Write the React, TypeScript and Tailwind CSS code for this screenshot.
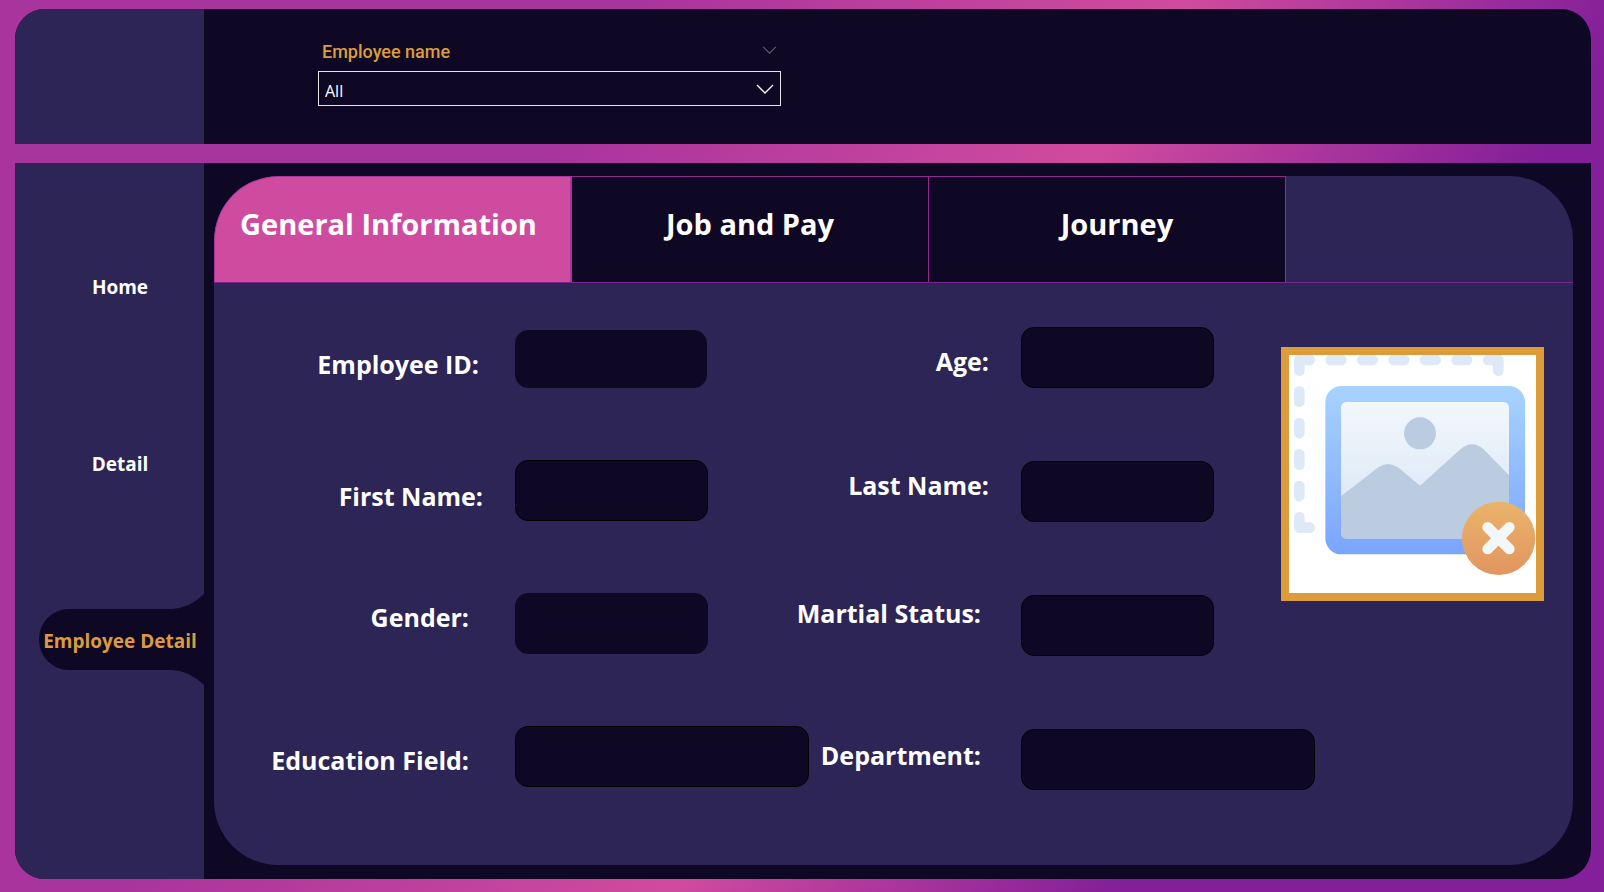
import React from "react";

type Field = {
  id: string;
  label: string;
  labelClass: string;
  inputClass: string;
};

const leftFields: Field[] = [
  { id: "employee-id", label: "Employee ID:", labelClass: "pt-4 pr-9", inputClass: "h-[58px] w-[192px] border-[#0f0825]" },
  { id: "first-name", label: "First Name:", labelClass: "pt-[18px] pr-8", inputClass: "h-[61px] w-[193px] border-black" },
  { id: "gender", label: "Gender:", labelClass: "pt-[6px] pr-[46px]", inputClass: "h-[61px] w-[193px] border-[#0f0825]" },
  { id: "education-field", label: "Education Field:", labelClass: "pt-4 pr-[46px]", inputClass: "h-[61px] w-[294px] border-black" },
];

const rightFields: Field[] = [
  { id: "age", label: "Age:", labelClass: "pt-4 pr-8", inputClass: "h-[61px] w-[193px] border-black" },
  { id: "last-name", label: "Last Name:", labelClass: "pt-[6px] pr-8", inputClass: "h-[61px] w-[193px] border-black" },
  { id: "marital-status", label: "Martial Status:", labelClass: "pr-10", inputClass: "h-[61px] w-[193px] border-black" },
  { id: "department", label: "Department:", labelClass: "pt-2 pr-10", inputClass: "h-[61px] w-[294px] border-black" },
];

function FieldRow({ field }: { field: Field }) {
  return (
    <div className="flex items-start">
      <label
        htmlFor={field.id}
        className={`flex-1 whitespace-nowrap text-right text-[25px] leading-9 font-bold ${field.labelClass}`}
      >
        {field.label}
      </label>
      <div className="flex w-[193px] shrink-0">
        <input
          id={field.id}
          type="text"
          readOnly
          className={`shrink-0 rounded-[13px] border bg-[#0f0825] px-4 text-xl text-white outline-none ${field.inputClass}`}
        />
      </div>
    </div>
  );
}

function Chevron({ className }: { className: string }) {
  return (
    <svg viewBox="0 0 18 10" fill="none" stroke="currentColor" className={className} aria-hidden="true">
      <path d="M1 1l8 8 8-8" strokeWidth="1.4" />
    </svg>
  );
}

function PhotoPlaceholder() {
  return (
    <svg viewBox="87 75 741 714" className="block w-full" role="img" aria-label="No photo">
      <defs>
        <linearGradient id="frame" x1="0" y1="0" x2="0" y2="1">
          <stop offset="0" stopColor="#a8d3ff" />
          <stop offset="1" stopColor="#7aa5ff" />
        </linearGradient>
        <linearGradient id="sky" x1="0" y1="0" x2="0" y2="1">
          <stop offset="0" stopColor="#f2f7fc" />
          <stop offset="1" stopColor="#d6e4f5" />
        </linearGradient>
        <linearGradient id="badge" x1="0" y1="0" x2="0" y2="1">
          <stop offset="0" stopColor="#e9b46a" />
          <stop offset="1" stopColor="#e29560" />
        </linearGradient>
        <clipPath id="scene">
          <rect x="243" y="216" width="504" height="410" rx="16" />
        </clipPath>
      </defs>
      <g fill="none" stroke="#dde9f7" strokeWidth="32" strokeLinecap="round" strokeLinejoin="round">
        <path d="M118 122V90h31M212 90h32M307 90h31M401 90h32M495 90h32M590 90h31M684 90h31v32" />
        <path d="M118 184v31M118 279v31M118 373v31M118 468v31M118 562v31h31" />
      </g>
      <rect x="196" y="168" width="599" height="505" rx="48" fill="url(#frame)" />
      <g clipPath="url(#scene)">
        <rect x="243" y="216" width="504" height="410" fill="url(#sky)" />
        <path d="M243 499L353 413Q384 391 416 413L480 467L602 357Q636 328 670 357L747 436V626H243z" fill="#bbcce1" />
        <circle cx="480" cy="310" r="48" fill="#bbcce1" />
      </g>
      <circle cx="716" cy="625" r="110" fill="url(#badge)" />
      <path d="M683 592l65 65M748 592l-65 65" stroke="#f2f7fc" strokeWidth="32" strokeLinecap="round" />
    </svg>
  );
}

const navLink = "flex h-[61px] items-center justify-center pt-1 pr-[3px] text-[19px] font-bold whitespace-nowrap";
const tab = "h-full w-[357px] shrink-0 border-t border-r border-[#92298c] bg-[#0f0825] pb-3 text-[29px] font-bold whitespace-nowrap";

export default function App() {
  return (
    <div className="flex min-h-screen flex-col gap-[19px] bg-[linear-gradient(120deg,#a8349d_30%,#d04b9f_56%,#831f99_77%)] pt-[9px] pr-[13px] pb-[13px] pl-[15px] font-['Open_Sans','Noto_Sans',sans-serif] text-white">
      <header className="flex h-[135px] overflow-hidden rounded-t-[30px] bg-[#0f0825]">
        <div className="w-[189px] shrink-0 bg-[#2c2556]" />
        <div className="ml-[114px] w-[463px] pt-[30px]">
          <div className="flex h-8 items-start justify-between px-1">
            <label htmlFor="employee-name" className="pt-px font-[Roboto,sans-serif] text-lg leading-6 font-medium text-[#dc9c3a]">
              Employee name
            </label>
            <button type="button" aria-label="Clear selection" className="pt-[7px] text-[#625c6b]">
              <Chevron className="h-2 w-[15px]" />
            </button>
          </div>
          <div className="relative">
            <select
              id="employee-name"
              className="block h-[35px] w-full appearance-none border border-[#e6e4ea] bg-[#0f0825] px-[6px] pt-1 text-base text-white outline-none"
            >
              <option>All</option>
            </select>
            <Chevron className="pointer-events-none absolute top-[13px] right-[7px] h-[10px] w-[18px]" />
          </div>
        </div>
      </header>

      <div className="flex flex-1 overflow-hidden rounded-b-[30px] bg-[#0f0825]">
        <nav className="flex w-[189px] shrink-0 flex-col gap-[116px] bg-[#2c2556] pt-[92px] pl-6">
          <a href="#home" className={navLink}>Home</a>
          <a href="#detail" className={navLink}>Detail</a>
          <a href="#employee-detail" aria-current="page" className={`relative rounded-l-[30px] bg-[#0f0825] text-[#dc9c3a] ${navLink}`}>
            <svg viewBox="0 0 32 15" className="absolute right-0 bottom-full h-[15px] w-8" aria-hidden="true">
              <path d="M0 15Q18 14 32 0V15z" fill="#0f0825" />
            </svg>
            Employee Detail
            <svg viewBox="0 0 32 15" className="absolute top-full right-0 h-[15px] w-8" aria-hidden="true">
              <path d="M0 0Q18 1 32 15V0z" fill="#0f0825" />
            </svg>
          </a>
        </nav>

        <main className="mt-[13px] mr-[18px] mb-[14px] ml-[10px] min-w-0 flex-1 overflow-hidden rounded-[64px] bg-[#2c2556]">
          <div role="tablist" className="flex h-[107px] border-b border-[#7a2390]">
            <button
              type="button"
              role="tab"
              aria-selected="true"
              className="h-full w-[358px] shrink-0 rounded-tl-[64px] border-t border-r-2 border-l border-[#a8349d] bg-[#ce4ba0] pr-2 pb-3 text-[29px] font-bold whitespace-nowrap"
            >
              General Information
            </button>
            <button type="button" role="tab" aria-selected="false" className={tab}>
              Job and Pay
            </button>
            <button type="button" role="tab" aria-selected="false" className={`${tab} pl-5`}>
              Journey
            </button>
          </div>

          <form className="grid grid-cols-[minmax(0,494fr)_minmax(0,506fr)_minmax(0,359fr)] items-start">
            <div className="flex flex-col gap-[72px] pt-[47px]">
              {leftFields.map((field) => (
                <FieldRow key={field.id} field={field} />
              ))}
            </div>
            <div className="flex flex-col gap-[73px] pt-11">
              {rightFields.map((field) => (
                <FieldRow key={field.id} field={field} />
              ))}
            </div>
            <figure className="mt-16 ml-[67px] w-[263px] border-8 border-[#dc9c3a] bg-white">
              <PhotoPlaceholder />
            </figure>
          </form>
        </main>
      </div>
    </div>
  );
}
